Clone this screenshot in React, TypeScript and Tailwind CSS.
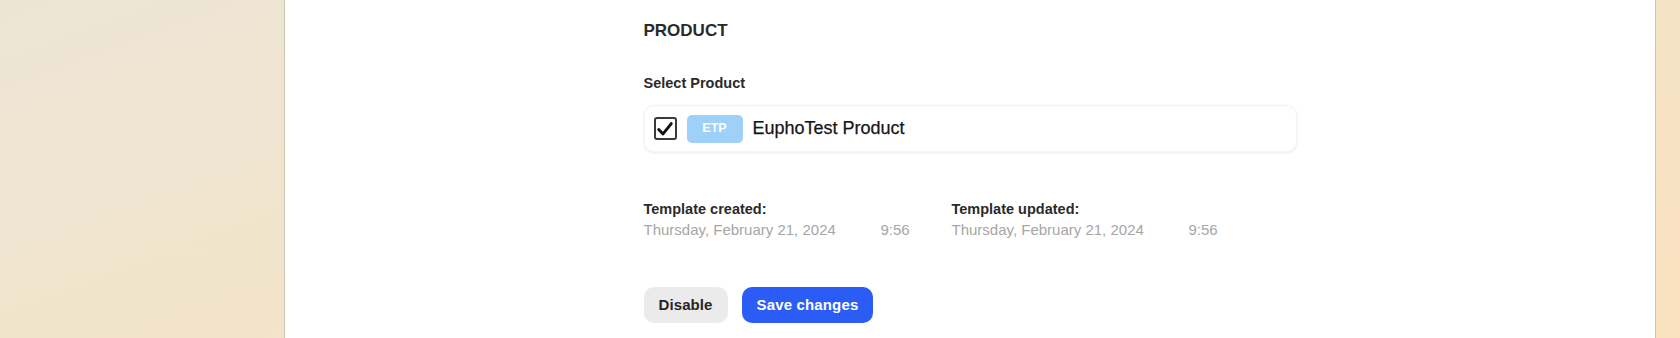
export default function App() {
  const font = { fontFamily: '"Liberation Sans", Arial, sans-serif' };

  return (
    <main
      className="flex h-[338px] w-full overflow-hidden bg-[linear-gradient(160deg,#ece5d6_0%,#f3e4c9_50%,#f9e1be_100%)] pl-[284px] pr-[24px] text-[#252525]"
      style={font}
    >
      <section className="flex flex-1 justify-center border-x border-[#cfc4b0] bg-white">
        <div className="w-[653px] pt-[21px]">
          <h2 className="text-[17px] font-bold leading-[20px] text-[#2a2a2a]">PRODUCT</h2>

          <p className="mt-[33px] text-[14.5px] font-bold leading-[18px] text-[#2a2a2a]">Select Product</p>

          <div className="mt-[13px] flex h-[47px] items-center gap-[10px] rounded-[10px] border border-[#f4f4f4] px-[9px] shadow-[0_1px_3px_rgba(0,0,0,0.09)]">
            <span className="flex h-[23px] w-[23px] items-center justify-center rounded-[3px] border-2 border-[#3a3a3a]">
              <svg viewBox="0 0 20 20" className="h-[18px] w-[18px]">
                <path d="M3 10.5 L7.8 15.5 L17 4" fill="none" stroke="#111" strokeWidth="3.2" strokeLinecap="round" strokeLinejoin="round" />
              </svg>
            </span>
            <span className="flex h-[28px] w-[56px] items-center justify-center rounded-[5px] bg-[#9ed0f8] text-[12.5px] font-bold text-white">
              ETP
            </span>
            <span className="text-[18px] text-[#161616] [-webkit-text-stroke:0.25px_#161616]">EuphoTest Product</span>
          </div>

          <div className="mt-[48px] grid grid-cols-[308px_308px]">
            <div>
              <p className="text-[14.5px] font-bold leading-[18px] text-[#2a2a2a]">Template created:</p>
              <p className="mt-[2px] flex text-[15px] leading-[20px] text-[#a6a6a6]">
                <span className="w-[237px]">Thursday, February 21, 2024</span>
                <span>9:56</span>
              </p>
            </div>
            <div>
              <p className="text-[14.5px] font-bold leading-[18px] text-[#2a2a2a]">Template updated:</p>
              <p className="mt-[2px] flex text-[15px] leading-[20px] text-[#a6a6a6]">
                <span className="w-[237px]">Thursday, February 21, 2024</span>
                <span>9:56</span>
              </p>
            </div>
          </div>

          <div className="mt-[47px] flex gap-[14px]">
            <button className="h-[36px] rounded-[10px] bg-[#ebebeb] px-[15px] text-[15px] font-bold tracking-[0.1px] text-[#262626]">
              Disable
            </button>
            <button className="h-[36px] rounded-[10px] bg-[#2b5cf6] px-[15px] text-[15px] font-bold tracking-[0.15px] text-white">
              Save changes
            </button>
          </div>
        </div>
      </section>
    </main>
  );
}
